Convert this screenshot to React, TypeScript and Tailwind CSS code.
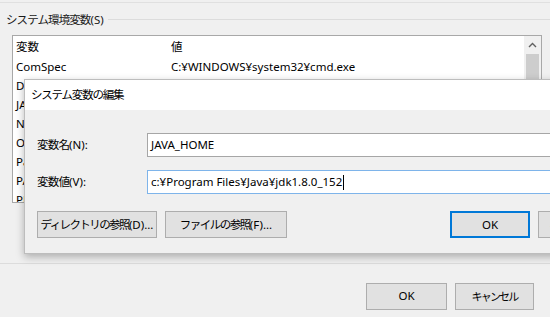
export default function App() {
  const rows = ["DriverData", "JAVA_HOME", "NUMBER_OF_PROCESSORS", "OS", "Path", "PATHEXT", "PROCESSOR_ARCHITECTURE"];

  return (
    <main className="relative h-[317px] w-[550px] overflow-hidden whitespace-nowrap bg-[#f0f0f0] font-['Noto_Sans','Noto_Sans_CJK_JP',sans-serif] text-[11.5px] leading-none text-black">
      {/* parent window: system variables group */}
      <div className="h-[2px]" />
      <div className="h-px bg-[#e0e0e0]" />
      <div className="flex items-center pl-[6px] pt-[11px]">
        <span className="text-[#1a1a1a]">
          <span className="tracking-[-0.9px]">システム環境変数</span>(S)
        </span>
        <div className="ml-[4px] h-px flex-1 bg-[#dcdcdc]" />
      </div>

      <div className="ml-[12px] mt-[9px] flex h-[168px] w-[530px] border border-[#a8a8a8] bg-white">
        <div className="flex-1 overflow-hidden">
          <div className="flex h-[22px] items-center">
            <span className="w-[158px] pl-[3px]">変数</span>
            <span>値</span>
          </div>
          <div className="flex h-[19px] items-center">
            <span className="w-[158px] pl-[3px]">ComSpec</span>
            <span>C:¥WINDOWS¥system32¥cmd.exe</span>
          </div>
          {rows.map((r) => (
            <div key={r} className="flex h-[19px] items-center">
              <span className="w-[158px] pl-[3px]">{r}</span>
            </div>
          ))}
        </div>
        <div className="flex w-[17px] flex-col bg-[#f0f0f0]">
          <div className="flex h-[18px] items-center justify-center">
            <svg width="9" height="6" viewBox="0 0 9 6">
              <path d="M1 5 L4.5 1.5 L8 5" fill="none" stroke="#606060" strokeWidth="1.4" />
            </svg>
          </div>
          <div className="mx-[2px] h-[60px] bg-[#cdcdcd]" />
        </div>
      </div>

      <div className="mt-[60px] h-px bg-[#dcdcdc]" />

      <div className="mt-[19px] flex gap-[8px] pl-[366px]">
        <button className="flex h-[27px] w-[81px] items-center justify-center border border-[#adadad] bg-[#e1e1e1]">OK</button>
        <button className="flex h-[27px] w-[79px] items-center justify-center border border-[#adadad] bg-[#e1e1e1] text-[11px] tracking-[-1.8px]">キャンセル</button>
      </div>

      {/* edit dialog window over the parent */}
      <div className="absolute left-[24px] top-[79px] flex h-[175px] w-[600px] flex-col border border-[#bdbdbd] bg-[#f0f0f0] shadow-[0_3px_8px_rgba(0,0,0,0.28)]">
        <div className="flex h-[30px] items-center bg-white pl-[6px] tracking-[-1.2px]">システム変数の編集</div>
        <div className="flex flex-col pl-[12px] pt-[23px]">
          <div className="flex items-center">
            <span className="w-[110px]">
              <span className="tracking-[-0.8px]">変数名</span>(N):
            </span>
            <div className="flex h-[24px] w-[460px] items-center border border-[#a6a6a6] bg-white pl-[3px]">JAVA_HOME</div>
          </div>
          <div className="mt-[13px] flex items-center">
            <span className="w-[110px]">
              <span className="tracking-[-0.8px]">変数値</span>(V):
            </span>
            <div className="flex h-[24px] w-[460px] items-center border border-[#7eb4ea] bg-white pl-[3px]">
              c:¥Program Files¥Java¥jdk1.8.0_152
              <span className="ml-px inline-block h-[15px] border-l border-black" />
            </div>
          </div>
          <div className="mt-[17px] flex items-center">
            <button className="flex h-[27px] w-[120px] items-center justify-center border border-[#adadad] bg-[#e1e1e1]">
              <span className="tracking-[-1.6px]">ディレクトリの参照</span>(D)...
            </button>
            <button className="ml-[8px] flex h-[27px] w-[122px] items-center justify-center border border-[#adadad] bg-[#e1e1e1]">
              <span className="tracking-[-1.5px]">ファイルの参照</span>(F)...
            </button>
            <button className="ml-[163px] flex h-[27px] w-[80px] items-center justify-center border-2 border-[#0078d7] bg-[#e1e1e1]">OK</button>
            <button className="ml-[8px] flex h-[27px] w-[80px] items-center justify-center border border-[#adadad] bg-[#e1e1e1]">キャンセル</button>
          </div>
        </div>
      </div>
    </main>
  );
}
